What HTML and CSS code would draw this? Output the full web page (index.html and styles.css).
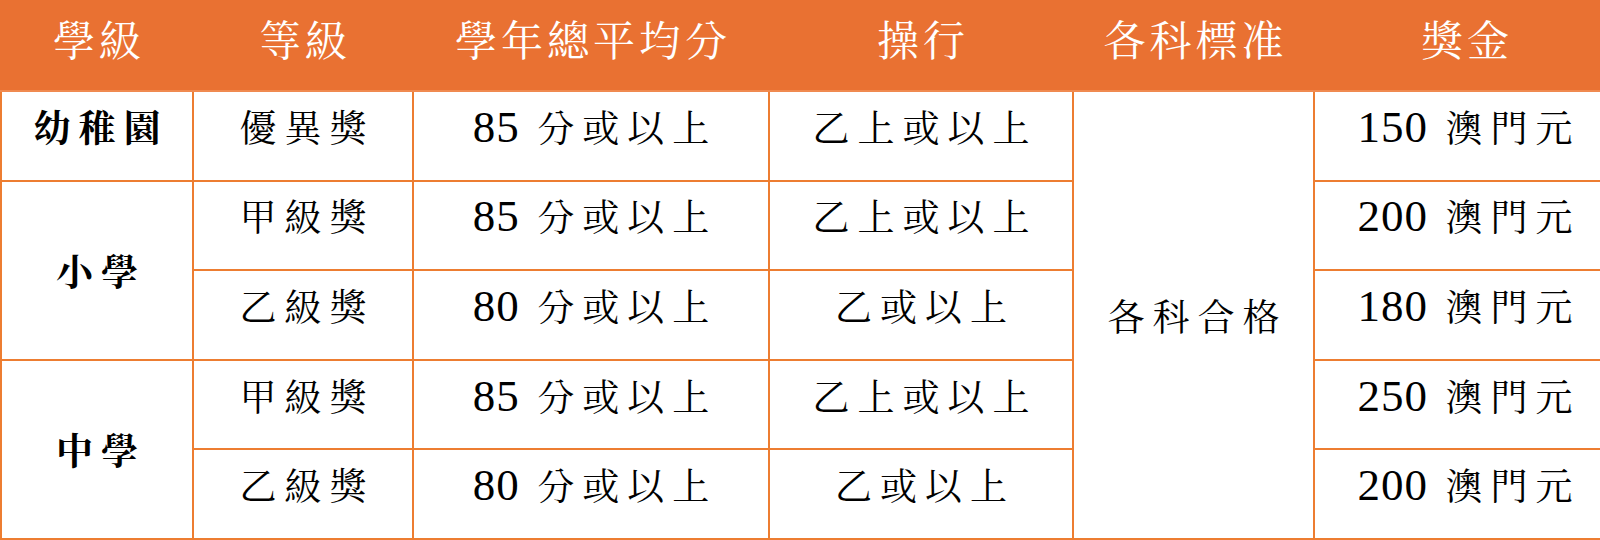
FILE: index.html
```html
<!DOCTYPE html>
<html lang="zh-Hant">
<head>
<meta charset="utf-8">
<title>獎學金</title>
<link rel="stylesheet" href="styles.css">
</head>
<body>
<table class="award">
  <colgroup>
    <col class="c1"><col class="c2"><col class="c3"><col class="c4"><col class="c5"><col class="c6">
  </colgroup>
  <thead>
    <tr class="head">
      <th>學級</th><th>等級</th><th>學年總平均分</th><th>操行</th><th>各科標准</th><th>獎金</th>
    </tr>
  </thead>
  <tbody>
    <tr>
      <td class="lvl">幼稚園</td>
      <td>優異獎</td>
      <td><span class="num">85</span> 分或以上</td>
      <td>乙上或以上</td>
      <td class="span" rowspan="5">各科合格</td>
      <td><span class="num">150</span> 澳門元</td>
    </tr>
    <tr>
      <td class="lvl span" rowspan="2">小學</td>
      <td>甲級獎</td>
      <td><span class="num">85</span> 分或以上</td>
      <td>乙上或以上</td>
      <td><span class="num">200</span> 澳門元</td>
    </tr>
    <tr>
      <td>乙級獎</td>
      <td><span class="num">80</span> 分或以上</td>
      <td>乙或以上</td>
      <td><span class="num">180</span> 澳門元</td>
    </tr>
    <tr>
      <td class="lvl span" rowspan="2">中學</td>
      <td>甲級獎</td>
      <td><span class="num">85</span> 分或以上</td>
      <td>乙上或以上</td>
      <td><span class="num">250</span> 澳門元</td>
    </tr>
    <tr>
      <td>乙級獎</td>
      <td><span class="num">80</span> 分或以上</td>
      <td>乙或以上</td>
      <td><span class="num">200</span> 澳門元</td>
    </tr>
  </tbody>
</table>
</body>
</html>
```
FILE: styles.css
```css
html, body {
  margin: 0;
  padding: 0;
  background: #ffffff;
  overflow: hidden;
}

.award {
  border-collapse: collapse;
  table-layout: fixed;
  width: 1615px;
  font-family: "Noto Serif CJK TC", "Noto Sans CJK TC", "Liberation Serif", serif;
  color: #000000;
}

.c1 { width: 192px; }
.c2 { width: 220px; }
.c3 { width: 356px; }
.c4 { width: 304px; }
.c5 { width: 241px; }
.c6 { width: 302px; }

.head {
  height: 90px;
  background: #e97132;
}

.head th {
  color: #ffffff;
  font-weight: 400;
  font-size: 42px;
  letter-spacing: 4px;
  text-align: center;
  vertical-align: middle;
  padding: 0 0 16px 4px;
  border: 2px solid #e97132;
  border-bottom-color: #f08a50;
}

tbody tr {
  height: 89.6px;
}

tbody td {
  font-size: 37px;
  letter-spacing: 8px;
  text-align: center;
  vertical-align: middle;
  padding: 0 0 20px 8px;
  border: 2px solid #ed7d31;
  white-space: nowrap;
}

tbody td.span {
  padding-bottom: 0;
}

tbody td.lvl {
  font-weight: 700;
}

.num {
  font-family: "Liberation Serif", serif;
  font-size: 45px;
  letter-spacing: 1px;
}
```
